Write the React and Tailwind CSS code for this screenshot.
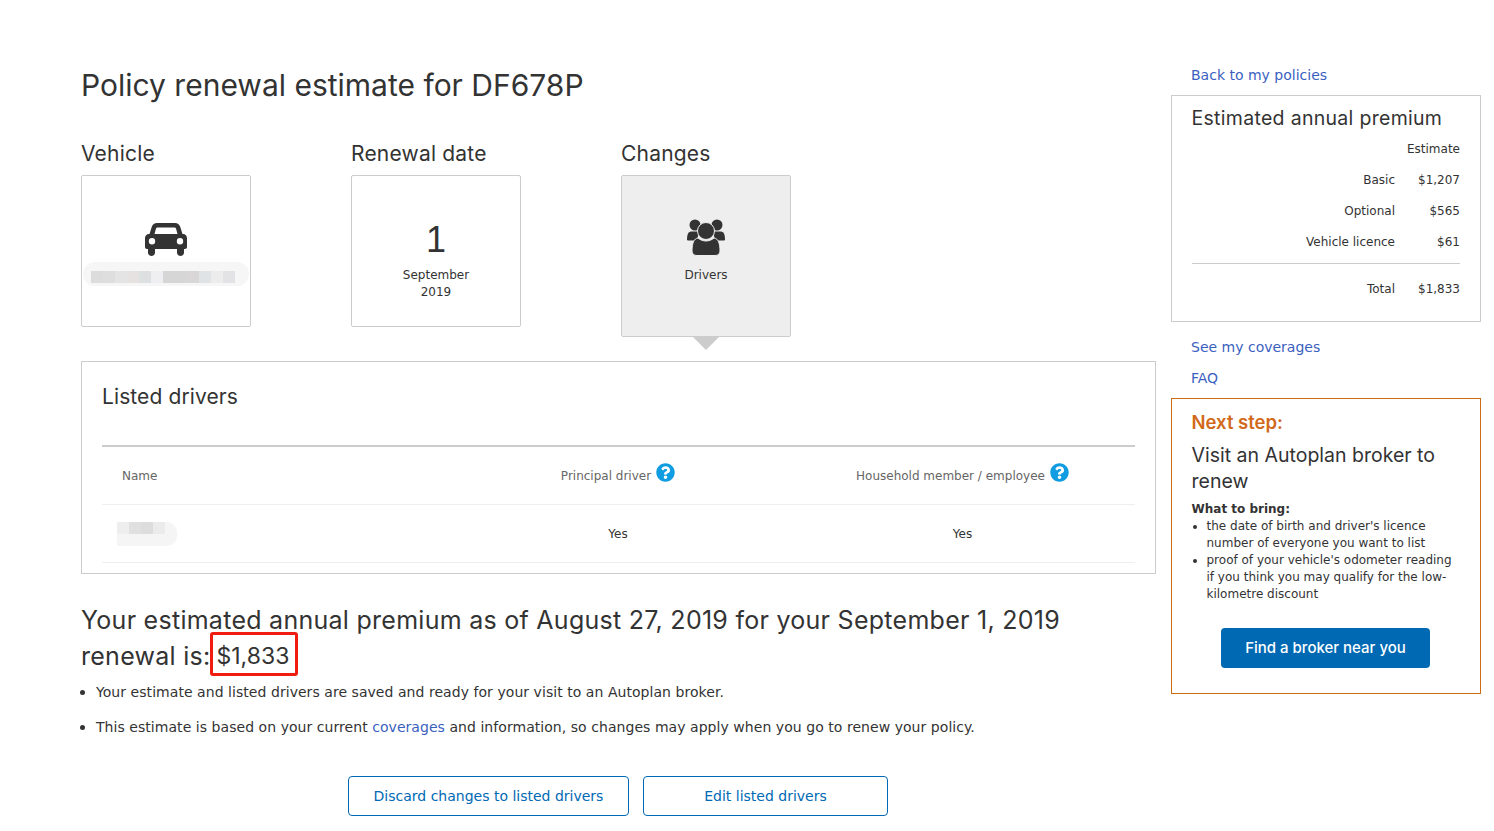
import { FaQuestionCircle } from 'react-icons/fa';

const heading = "font-['Inter','Open_Sans',sans-serif]";
const linkClass = 'text-[#3b5fc0]';

const CarIcon = () => (
  <svg width="42" height="33" viewBox="0 0 42 33" fill="#333">
    <path fillRule="evenodd" d="M12 0h18c2.6 0 4.4 1.4 5.2 3.8L37.5 11h.5c2.4 0 4 2 4 4.2V24c0 1.2-.8 2-2 2h-1v3.5c0 2-1.6 3.5-3.5 3.5S32 31.500 32 29.500V26H10v3.500C10 31.500 8.400 33 6.500 33S3 31.500 3 29.500V26H2c-1.200 0-2-.8-2-2v-8.800C0 13 1.600 11 4 11h.5l2.300-7.200C7.600 1.400 9.400 0 12 0zm.5 4.500c-.8 0-1.300.4-1.500 1.100L9.500 11h23L31 5.600c-.2-.7-.7-1.100-1.500-1.100h-17zM7 15a3.200 3.200 0 1 0 0 6.400A3.200 3.200 0 0 0 7 15zm28 0a3.200 3.200 0 1 0 0 6.400 3.200 3.200 0 0 0 0-6.400z" />
  </svg>
);

const UsersIcon = () => (
  <svg width="40" height="37" viewBox="0 0 40 37">
    <circle cx="9" cy="6" r="5.500" fill="#333" />
    <circle cx="31" cy="6" r="5.500" fill="#333" />
    <path d="M1 21c0-5 1-8.500 4-8.500h8L11 21.500H3c-1.200 0-2-.3-2-.5z" fill="#333" />
    <path d="M39 21c0-5-1-8.500-4-8.500h-8l2 9h8c1.200 0 2-.3 2-.5z" fill="#333" />
    <path d="M6 32c0-8 2-12.500 6-13 2 1.800 5 3 8 3s6-1.200 8-3c4 .5 6 5 6 13 0 3-2 4.500-5 4.500H11c-3 0-5-1.500-5-4.500z" fill="#333" stroke="#eee" strokeWidth="1" />
    <circle cx="20" cy="12" r="8.500" fill="#333" stroke="#eee" strokeWidth="1" />
  </svg>
);

const BlurCells = ({ cells, className }) => (
  <div className={`flex ${className}`}>
    {cells.map((c, i) => (
      <div key={i} className="h-full w-[12px]" style={{ background: c }} />
    ))}
  </div>
);

const SummaryColumn = ({ title, children, tall, active }) => (
  <div className="w-[270px]">
    <h2 className={`${heading} text-[21px] leading-[26px] text-[#333] h-[35px] pt-[1px] tracking-[0.2px]`}>{title}</h2>
    <div className={`relative w-[170px] ${tall ? 'h-[162px]' : 'h-[152px]'} border border-[#ccc] rounded-[2px] flex flex-col items-center ${active ? 'bg-[#eeeeee]' : 'bg-white'}`}>
      {children}
      {active && (
        <div className="absolute left-[70px] top-[160px] w-0 h-0 border-x-[14px] border-x-transparent border-t-[14px] border-t-[#ccc]" />
      )}
    </div>
  </div>
);

const PremiumRow = ({ label, value }) => (
  <div className="flex justify-end h-[31px] items-center text-[12px] text-[#333]">
    <span>{label}</span>
    <span className="w-[65px] text-right">{value}</span>
  </div>
);

export default function App() {
  return (
    <div className="flex pl-[81px] pt-[62px] bg-white w-[1494px] h-[831px] overflow-hidden text-[#333] font-['DejaVu_Sans','Liberation_Sans',sans-serif]">
      <main className="w-[1075px] shrink-0">
        <h1 className={`${heading} text-[30px] leading-[46px] text-[#333]`}>Policy renewal estimate for DF678P</h1>

        <div className="flex mt-[32px]">
          <SummaryColumn title="Vehicle">
            <div className="mt-[47px]"><CarIcon /></div>
            <div className="relative w-[166px] h-[24px] mt-[6px] bg-[#f6f6f6] rounded-full">
              <BlurCells
                className="absolute left-[8px] top-[9px] h-[12px]"
                cells={['#dcdcdc', '#dedede', '#e4e4e4', '#e6e2e2', '#dde0e0', '#efeff1', '#d6d6d6', '#d6d6d6', '#d8d6d6', '#e0e3e6', '#ececec', '#e3e3e5']}
              />
            </div>
          </SummaryColumn>
          <SummaryColumn title="Renewal date">
            <div className="mt-[42px] text-[36px] leading-[44px] font-['Liberation_Sans',sans-serif]">1</div>
            <div className="text-[12px] leading-[17px] text-center mt-[5px]">September<br />2019</div>
          </SummaryColumn>
          <SummaryColumn title="Changes" tall active>
            <div className="mt-[43px]"><UsersIcon /></div>
            <div className="text-[12px] leading-[17px] mt-[11px]">Drivers</div>
          </SummaryColumn>
        </div>

        <section className="mt-[24px] h-[213px] border border-[#ccc] px-[20px] pt-[21px]">
          <h2 className={`${heading} text-[21px] leading-[28px] tracking-[0.1px]`}>Listed drivers</h2>
          <div className="mt-[34px] border-t-2 border-[#ccc]">
            <div className="flex h-[58px] items-center border-b border-[#eee] text-[12px] text-[#666]">
              <div className="w-[344px] pl-[20px] pt-[1px]">Name</div>
              <div className="w-[344px] flex justify-center items-center gap-[5px]">
                <span className="pt-[1px]">Principal driver</span> <FaQuestionCircle className="text-[#0f9ce0] text-[19px] -mt-[6px]" />
              </div>
              <div className="w-[345px] flex justify-center items-center gap-[5px]">
                <span className="pt-[1px]">Household member / employee</span> <FaQuestionCircle className="text-[#0f9ce0] text-[19px] -mt-[6px]" />
              </div>
            </div>
            <div className="flex h-[58px] items-center border-b border-[#eee] text-[12px] text-[#333]">
              <div className="w-[344px] pl-[15px] pt-[1px]">
                <div className="w-[60px] h-[24px] bg-[#f5f5f5] rounded-r-[10px] overflow-hidden">
                  <BlurCells className="h-[12px]" cells={['#eeeeee', '#e0e0e0', '#dddddd', '#ebebeb']} />
                </div>
              </div>
              <div className="w-[344px] text-center">Yes</div>
              <div className="w-[345px] text-center">Yes</div>
            </div>
          </div>
        </section>

        <h2 className={`${heading} mt-[28px] text-[25px] leading-[36px] tracking-[0.27px]`}>
          Your estimated annual premium as of August 27, 2019 for your September 1, 2019 renewal is:
          <span className="inline-block align-top -my-[6px] w-[88px] h-[44px] leading-[42px] pl-[3px] text-left text-[23px] tracking-normal border-[3px] border-[#f01c10] rounded-[3px]">$1,833</span>
        </h2>

        <ul className="mt-[10px] text-[14px] leading-[17px] tracking-[0.05px] text-[#333]">
          <li className="relative pl-[15px] mb-[18px]">
            <span className="absolute left-[-1px] top-[6px] w-[5px] h-[5px] rounded-full bg-[#333]" />
            Your estimate and listed drivers are saved and ready for your visit to an Autoplan broker.
          </li>
          <li className="relative pl-[15px]">
            <span className="absolute left-[-1px] top-[6px] w-[5px] h-[5px] rounded-full bg-[#333]" />
            This estimate is based on your current <a className={linkClass}>coverages</a> and information, so changes may apply when you go to renew your policy.
          </li>
        </ul>

        <div className="flex gap-[14px] mt-[40px] pl-[267px]">
          <button className="w-[281px] h-[40px] border border-[#0069b4] rounded-[4px] text-[14px] text-[#0069b4]">Discard changes to listed drivers</button>
          <button className="w-[245px] h-[40px] border border-[#0069b4] rounded-[4px] text-[14px] text-[#0069b4]">Edit listed drivers</button>
        </div>
      </main>

      <aside className="w-[310px] ml-[15px] shrink-0">
        <a className={`${linkClass} block pl-[20px] text-[14px] leading-[26px]`}>Back to my policies</a>
        <div className="mt-[7px] h-[227px] border border-[#ccc] pl-[19.500px] pr-[20px] pt-[9px]">
          <h3 className={`${heading} text-[19.500px] leading-[26px] tracking-[0.3px]`}>Estimated annual premium</h3>
          <div className="mt-[10px] text-right text-[12px] leading-[17px]">Estimate</div>
          <div className="mt-[6px]">
            <PremiumRow label="Basic" value="$1,207" />
            <PremiumRow label="Optional" value="$565" />
            <PremiumRow label="Vehicle licence" value="$61" />
          </div>
          <div className="mt-[6px] border-t border-[#ccc] pt-[9px]">
            <PremiumRow label="Total" value="$1,833" />
          </div>
        </div>

        <a className={`${linkClass} block pl-[20px] mt-[12px] text-[14px] leading-[26px]`}>See my coverages</a>
        <a className={`${linkClass} block pl-[20px] mt-[5px] text-[14px] leading-[26px]`}>FAQ</a>

        <div className="mt-[7px] h-[296px] border border-[#cc6d14] pl-[19.500px] pr-[20.500px] pt-[11px]">
          <h3 className={`${heading} text-[18.500px] leading-[24px] font-semibold text-[#d2691a]`}>Next step:</h3>
          <p className={`${heading} mt-[8px] text-[19.500px] leading-[26px]`}>Visit an Autoplan broker to renew</p>
          <p className="mt-[7px] text-[12px] leading-[17px] font-bold">What to bring:</p>
          <ul className="text-[12px] leading-[17px]">
            <li className="relative pl-[15px]">
              <span className="absolute left-[1px] top-[7px] w-[4px] h-[4px] rounded-full bg-[#333]" />
              the date of birth and driver's licence number of everyone you want to list
            </li>
            <li className="relative pl-[15px]">
              <span className="absolute left-[1px] top-[7px] w-[4px] h-[4px] rounded-full bg-[#333]" />
              proof of your vehicle's odometer reading if you think you may qualify for the low-kilometre discount
            </li>
          </ul>
          <div className="flex justify-center mt-[25px]">
            <button className={`${heading} w-[209px] h-[40px] bg-[#0069b3] rounded-[4px] text-white text-[15px] font-medium`}>Find a broker near you</button>
          </div>
        </div>
      </aside>
    </div>
  );
}
